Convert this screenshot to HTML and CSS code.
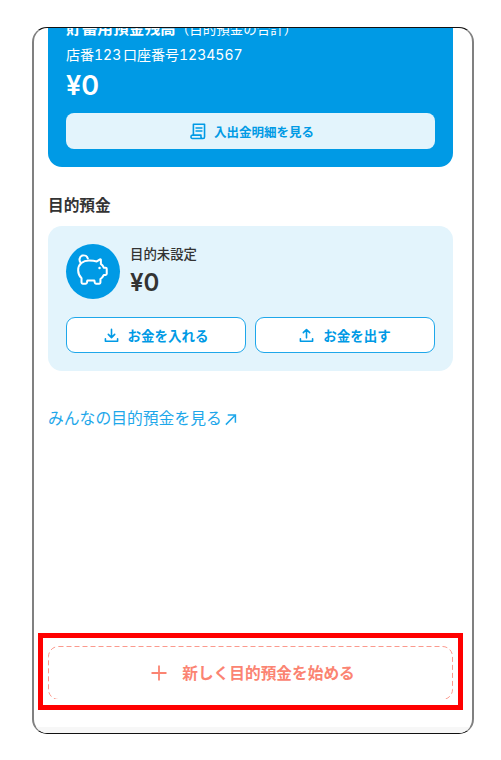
FILE: index.html
```html
<!DOCTYPE html>
<html lang="ja">
<head>
  <meta charset="UTF-8" />
  <meta name="viewport" content="width=device-width, initial-scale=1.0"/>
  <title>目的預金</title>
  <link rel="stylesheet" href="styles.css">
</head>
<body>

  <div class="phone">
    <main class="content">
      <section class="balance-card">
        <p class="balance-title"><strong>貯蓄用預金残高</strong><span>（目的預金の合計）</span></p>
        <p class="balance-account">店番123 口座番号1234567</p>
        <p class="balance-amount">¥0</p>
        <a class="statement-btn" href="#">
          <svg class="icon-statement" viewBox="0 0 18 18" fill="none" stroke="currentColor" stroke-width="1.7" stroke-linejoin="round" stroke-linecap="round">
            <path d="M3.6 13V1.9H15.4V15.4C15.4 16.4 14.8 17 13.8 17H2.6C1.6 17 1 16.2 1 15.2C1 14.2 1.6 13.4 2.6 13.4H11.6V15.2C11.6 16.2 12.4 17 13.6 17"/>
            <path d="M6.4 5.8H12.6M6.4 9H12.6"/>
          </svg>
          入出金明細を見る
        </a>
      </section>

      <h2 class="section-title">目的預金</h2>

      <section class="goal-card">
        <div class="goal-info">
          <div class="goal-icon">
            <svg viewBox="0 1 32 32" fill="none" stroke="#fff" stroke-width="1.8" stroke-linejoin="round" stroke-linecap="round">
              <path d="M5.2 8.8C3.2 7 3.8 3.2 6.6 2.4C8.8 1.8 10.8 3 11.4 5"/>
              <path d="M19.4 7.6L22.2 5.8C22.6 5.6 23 5.8 23 6.2V9.8C24.4 10.8 25.2 12 25.6 13.2H27.2C27.8 13.2 28.2 13.6 28.2 14.2V18.6C28.2 19.2 27.8 19.6 27.2 19.6H25.6C24.8 21.2 23.8 22.4 22.6 23.2V26.4C22.6 27 22.2 27.4 21.6 27.4H18.8C18.2 27.4 17.8 27 17.6 26.4L17.2 24.6H11L10.6 26.4C10.4 27 10 27.4 9.4 27.4H6.8C6.2 27.4 5.8 27 5.8 26.4V22.6C3.8 20.6 2.8 18.4 2.8 15.4C2.8 10 7.2 6.8 12.4 6.8C15 6.8 17.4 7 19.4 7.6Z"/>
              <circle cx="21.8" cy="13.4" r="1.1" fill="#fff" stroke="none"/>
            </svg>
          </div>
          <div class="goal-text">
            <p class="goal-name">目的未設定</p>
            <p class="goal-amount">¥0</p>
          </div>
        </div>
        <div class="goal-actions">
          <a class="action-btn" href="#">
            <svg class="icon-action" viewBox="0 0 16 16" fill="none" stroke="currentColor" stroke-width="1.7" stroke-linecap="round" stroke-linejoin="round">
              <path d="M8 1.5V10M4.6 6.8L8 10.2L11.4 6.8M1.5 11.5V14.2H14.5V11.5"/>
            </svg>
            お金を入れる
          </a>
          <a class="action-btn" href="#">
            <svg class="icon-action" viewBox="0 0 16 16" fill="none" stroke="currentColor" stroke-width="1.7" stroke-linecap="round" stroke-linejoin="round">
              <path d="M8 10.5V1.8M4.6 5L8 1.6L11.4 5M1.5 11.5V14.2H14.5V11.5"/>
            </svg>
            お金を出す
          </a>
        </div>
      </section>

      <a class="all-goals" href="#">みんなの目的預金を見る<svg class="icon-external" viewBox="0 0 14 14" fill="none" stroke="currentColor" stroke-width="1.6"><path d="M2 12.5L12 2.5M4 2.2H12.3V10.5"/></svg></a>
    </main>

    <div class="highlight">
      <a class="new-goal" href="#">
        <svg class="dash-outline" fill="none"><rect x="0.5" y="0.5" width="404" height="53" rx="10" stroke="#fb9a8e" stroke-dasharray="5 3"/></svg>
        <svg class="icon-plus" viewBox="0 0 16 16" fill="none" stroke="currentColor" stroke-width="1.8"><path d="M8 0.5V15.5M0.5 8H15.5"/></svg>
        新しく目的預金を始める
      </a>
    </div>
    <div class="bottom-strip"></div>
  </div>

</body>
</html>
```

FILE: styles.css
```css
* {
  box-sizing: border-box;
}

body {
  margin: 0;
  background-color: #fff;
  font-family: Inter, "Noto Sans CJK JP", sans-serif;
  color: #333;
}

p,
h2 {
  margin: 0;
}

a {
  text-decoration: none;
}

.phone {
  display: flex;
  flex-direction: column;
  width: 442px;
  height: 707px;
  margin: 27px 0 0 32px;
  background-color: #fff;
  border: 1px solid #111;
  border-left: 2px solid #808080;
  border-right: 2px solid #808080;
  border-radius: 15px;
  overflow: hidden;
}

.content {
  flex: 1;
  margin-top: -18px;
  padding: 0 19px 0 14px;
}

.balance-card {
  height: 157px;
  padding: 9px 18px 0;
  background-color: #009ae5;
  border-radius: 0 0 14px 14px;
  color: #fff;
}

.balance-title {
  font-size: 15.7px;
  line-height: 20px;
}

.balance-title strong {
  font-weight: 700;
}

.balance-title span {
  font-size: 13.5px;
}

.balance-account {
  margin-top: 6px;
  font-size: 14px;
  font-variant-numeric: tabular-nums;
  word-spacing: -2px;
  line-height: 20px;
}

.balance-amount {
  margin-top: 2px;
  font-size: 27px;
  font-weight: 600;
  line-height: 38px;
}

.statement-btn {
  display: flex;
  align-items: center;
  justify-content: center;
  gap: 7px;
  height: 36px;
  margin-top: 8px;
  padding-left: 3px;
  background-color: #e3f4fc;
  border-radius: 8px;
  color: #009ae5;
  font-size: 12.5px;
  font-weight: 700;
}

.icon-statement {
  width: 17px;
  height: 18px;
}

.section-title {
  margin-top: 28px;
  font-size: 15.7px;
  font-weight: 700;
  line-height: 22px;
}

.goal-card {
  height: 145px;
  margin-top: 9px;
  padding: 18px 18px 0;
  background-color: #e3f4fc;
  border-radius: 14px;
}

.goal-info {
  display: flex;
  gap: 10px;
}

.goal-icon {
  display: flex;
  align-items: center;
  justify-content: center;
  width: 54px;
  height: 55px;
  background-color: #009ae5;
  border-radius: 50%;
}

.goal-icon svg {
  width: 36px;
  height: 36px;
}

.goal-name {
  margin-top: 1px;
  font-size: 13.4px;
  font-weight: 500;
  line-height: 18px;
}

.goal-amount {
  margin-top: 3px;
  font-size: 24px;
  font-weight: 600;
  line-height: 34px;
}

.goal-actions {
  display: flex;
  gap: 9px;
  margin-top: 17px;
}

.action-btn {
  flex: 1;
  display: flex;
  align-items: center;
  justify-content: center;
  gap: 9px;
  height: 36px;
  background-color: #fff;
  border: 1px solid #1ea7ea;
  border-radius: 9px;
  color: #009ae5;
  font-size: 13.5px;
  font-weight: 700;
}

.icon-action {
  width: 15px;
  height: 15px;
}

.all-goals {
  display: inline-flex;
  align-items: center;
  gap: 2px;
  margin-top: 37px;
  color: #1ea7ea;
  font-size: 15.8px;
  line-height: 22px;
}

.icon-external {
  width: 13px;
  height: 13px;
}

.highlight {
  flex: none;
  height: 77px;
  margin: 0 9px 17px 4px;
  padding: 8px 5px 6px;
  border: 5px solid #ff0000;
}

.new-goal {
  position: relative;
  display: flex;
  align-items: center;
  justify-content: center;
  gap: 15px;
  height: 100%;
  padding-left: 5px;
  color: #fb8472;
  font-size: 15.7px;
  font-weight: 700;
}

.dash-outline {
  position: absolute;
  top: 0;
  left: 0;
  width: 100%;
  height: 100%;
}

.icon-plus {
  width: 16px;
  height: 16px;
}

.bottom-strip {
  flex: none;
  height: 6px;
  background-color: #f7f7f7;
}
```
